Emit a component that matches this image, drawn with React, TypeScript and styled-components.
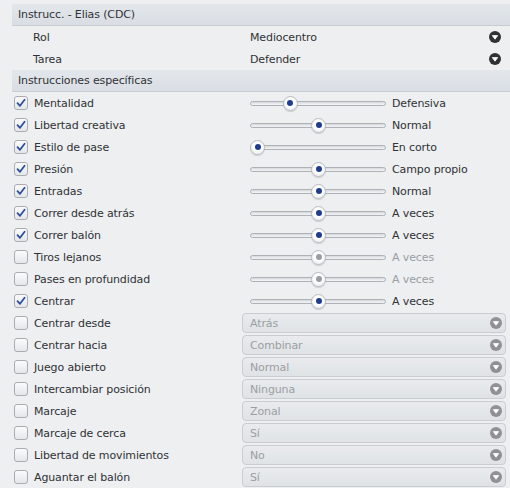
import React from "react";
import styled, { createGlobalStyle } from "styled-components";

const GlobalStyle = createGlobalStyle`
  html, body {
    margin: 0;
    padding: 0;
    background: #edeff1;
  }
  body {
    font-family: "DejaVu Sans", "Liberation Sans", sans-serif;
    font-size: 11px;
    letter-spacing: -0.12px;
    color: #303235;
  }
`;

const Panel = styled.div`
  width: 510px;
  height: 488px;
  padding: 4px 0 0 12px;
  box-sizing: border-box;
  overflow: hidden;
`;

const SectionHeader = styled.div`
  height: 21px;
  line-height: 21px;
  padding-left: 6px;
  background: linear-gradient(#e3e7ec, #d9dee4);
  border-bottom: 1px solid #c8cdd3;
  color: #303235;
`;

const InfoRow = styled.div`
  height: 22px;
  display: grid;
  grid-template-columns: 217px 1fr 12px;
  align-items: center;
  padding: 0 9px 0 21px;
`;

const CheckRow = styled.div`
  height: 22px;
  display: grid;
  grid-template-columns: 228px 1fr;
  align-items: center;
  padding: 0 4px 0 2px;
`;

const LabelCell = styled.label`
  display: flex;
  align-items: center;
  gap: 6px;
  white-space: nowrap;
`;

const Box = styled.span`
  width: 14px;
  height: 14px;
  box-sizing: border-box;
  border: 1px solid #a9adb2;
  border-radius: 3px;
  background: linear-gradient(#fbfbfc, #e4e6e9);
  display: flex;
  align-items: center;
  justify-content: center;
`;

const SliderCell = styled.div`
  display: flex;
  align-items: center;
  gap: 6px;
  padding-left: 8px;
`;

const Track = styled.div`
  position: relative;
  width: 136px;
  height: 5px;
  box-sizing: border-box;
  border: 1px solid #aeb2b7;
  border-radius: 3px;
  background: linear-gradient(#d6d9dd, #f4f5f6);
`;

const Thumb = styled.div<{ $disabled?: boolean }>`
  position: absolute;
  top: 50%;
  width: 15px;
  height: 15px;
  margin-top: -7.5px;
  margin-left: -1px;
  box-sizing: border-box;
  border-radius: 50%;
  border: 1px solid #b9bdc2;
  background: radial-gradient(circle at 50% 40%, #ffffff 40%, #e3e6e9 100%);
  box-shadow: 0 1px 1px rgba(0, 0, 0, 0.15);
  display: flex;
  align-items: center;
  justify-content: center;
  &::after {
    content: "";
    width: 6px;
    height: 6px;
    border-radius: 50%;
    background: ${(p) => (p.$disabled ? "#9a9c9f" : "#1f3d8c")};
  }
`;

const ValueText = styled.span<{ $disabled?: boolean }>`
  color: ${(p) => (p.$disabled ? "#9b9ea2" : "#303235")};
  white-space: nowrap;
`;

const Select = styled.div`
  height: 20px;
  box-sizing: border-box;
  border: 1px solid #c9ccd0;
  border-radius: 4px;
  background: linear-gradient(#e9ebed, #e0e3e6);
  display: flex;
  align-items: center;
  justify-content: space-between;
  padding: 0 3px 0 7px;
  color: #9b9ea2;
`;

const ArrowIcon = ({ color }: { color: string }) => (
  <svg width="12" height="12" viewBox="0 0 12 12">
    <circle cx="6" cy="6" r="6" fill={color} />
    <path d="M3.3 4.6 L8.7 4.6 L6 8.2 Z" fill="#fff" stroke="#fff" strokeWidth="0.8" strokeLinejoin="round" />
  </svg>
);

const CheckMark = () => (
  <svg width="10" height="10" viewBox="0 0 10 10">
    <path d="M1.5 5.2 L4 7.8 L8.6 1.8" fill="none" stroke="#2b4f9e" strokeWidth="1.8" strokeLinecap="round" strokeLinejoin="round" />
  </svg>
);

type SliderItem = { kind: "slider"; label: string; checked: boolean; value: number; text: string; disabled?: boolean };
type SelectItem = { kind: "select"; label: string; checked: boolean; text: string };
type Item = SliderItem | SelectItem;

const items: Item[] = [
  { kind: "slider", label: "Mentalidad", checked: true, value: 0.27, text: "Defensiva" },
  { kind: "slider", label: "Libertad creativa", checked: true, value: 0.5, text: "Normal" },
  { kind: "slider", label: "Estilo de pase", checked: true, value: 0, text: "En corto" },
  { kind: "slider", label: "Presión", checked: true, value: 0.5, text: "Campo propio" },
  { kind: "slider", label: "Entradas", checked: true, value: 0.5, text: "Normal" },
  { kind: "slider", label: "Correr desde atrás", checked: true, value: 0.5, text: "A veces" },
  { kind: "slider", label: "Correr balón", checked: true, value: 0.5, text: "A veces" },
  { kind: "slider", label: "Tiros lejanos", checked: false, value: 0.5, text: "A veces", disabled: true },
  { kind: "slider", label: "Pases en profundidad", checked: false, value: 0.5, text: "A veces", disabled: true },
  { kind: "slider", label: "Centrar", checked: true, value: 0.5, text: "A veces" },
  { kind: "select", label: "Centrar desde", checked: false, text: "Atrás" },
  { kind: "select", label: "Centrar hacia", checked: false, text: "Combinar" },
  { kind: "select", label: "Juego abierto", checked: false, text: "Normal" },
  { kind: "select", label: "Intercambiar posición", checked: false, text: "Ninguna" },
  { kind: "select", label: "Marcaje", checked: false, text: "Zonal" },
  { kind: "select", label: "Marcaje de cerca", checked: false, text: "Sí" },
  { kind: "select", label: "Libertad de movimientos", checked: false, text: "No" },
  { kind: "select", label: "Aguantar el balón", checked: false, text: "Sí" },
];

export default function App() {
  return (
    <>
      <GlobalStyle />
      <Panel>
        <SectionHeader>Instrucc. - Elias (CDC)</SectionHeader>
        <InfoRow>
          <span>Rol</span>
          <span>Mediocentro</span>
          <ArrowIcon color="#2f3133" />
        </InfoRow>
        <InfoRow>
          <span>Tarea</span>
          <span>Defender</span>
          <ArrowIcon color="#2f3133" />
        </InfoRow>
        <SectionHeader>Instrucciones específicas</SectionHeader>
        {items.map((it) => (
          <CheckRow key={it.label}>
            <LabelCell>
              <Box>{it.checked && <CheckMark />}</Box>
              {it.label}
            </LabelCell>
            {it.kind === "slider" ? (
              <SliderCell>
                <Track>
                  <Thumb $disabled={it.disabled} style={{ left: `${it.value * 122}px` }} />
                </Track>
                <ValueText $disabled={it.disabled}>{it.text}</ValueText>
              </SliderCell>
            ) : (
              <Select>
                <span>{it.text}</span>
                <ArrowIcon color="#8f9194" />
              </Select>
            )}
          </CheckRow>
        ))}
      </Panel>
    </>
  );
}
